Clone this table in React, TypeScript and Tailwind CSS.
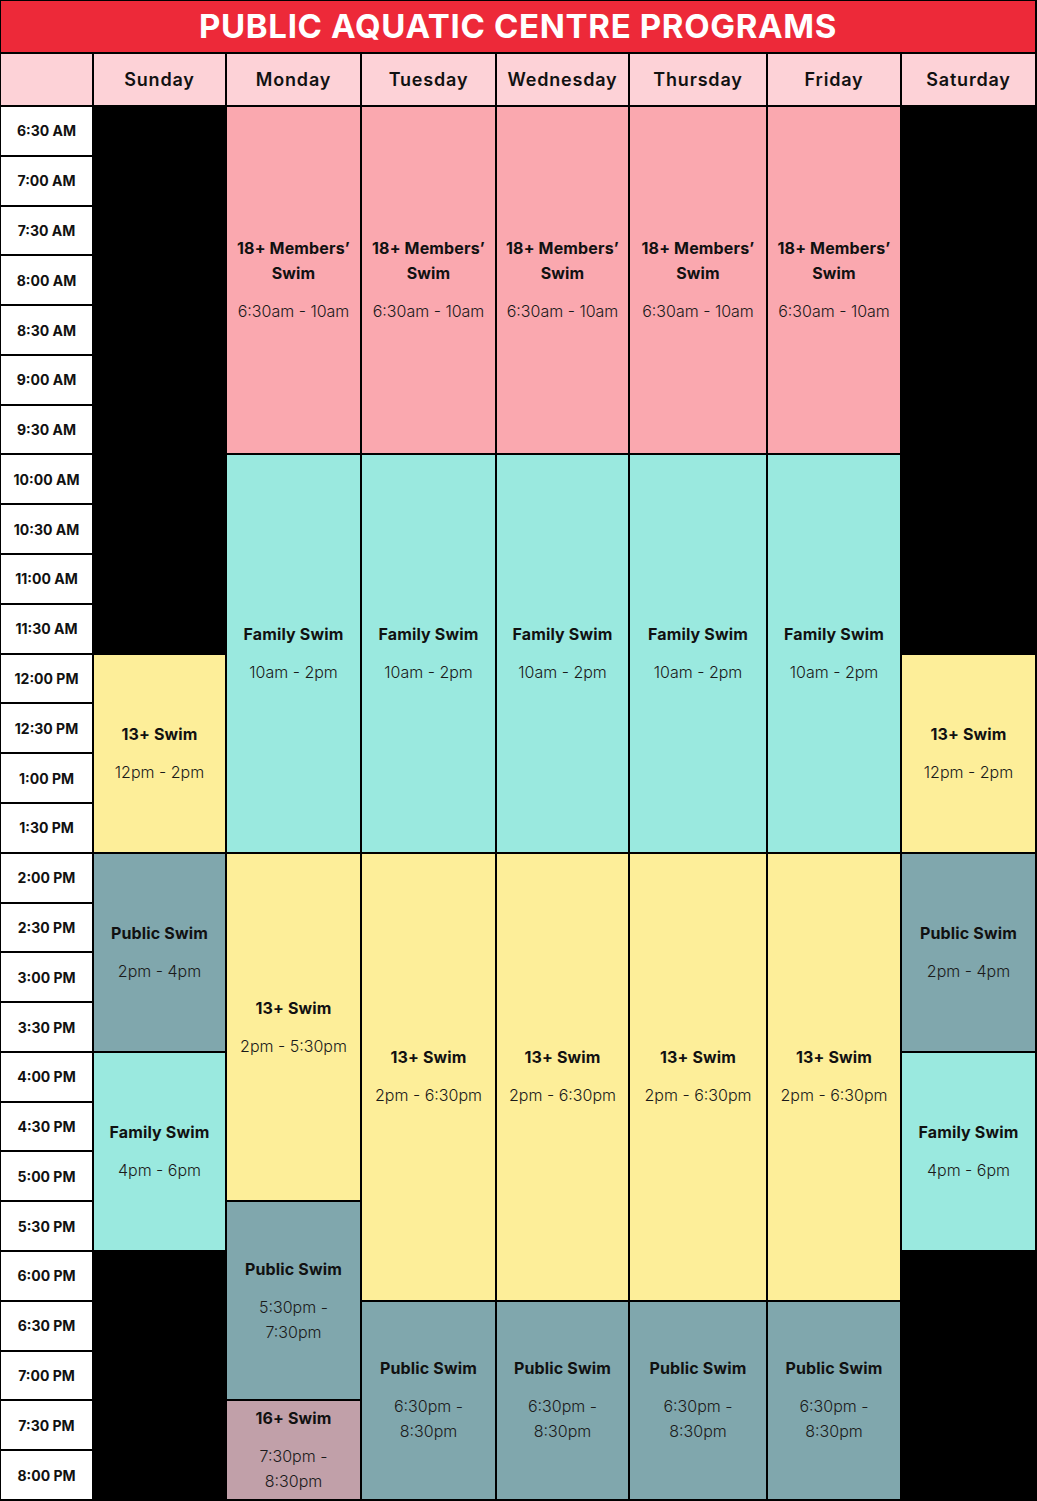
import React from "react";

type Ev = { start: number; span: number; title: string[]; time: string[]; bg: string };

const times = [
  "6:30 AM","7:00 AM","7:30 AM","8:00 AM","8:30 AM","9:00 AM","9:30 AM","10:00 AM","10:30 AM","11:00 AM","11:30 AM",
  "12:00 PM","12:30 PM","1:00 PM","1:30 PM","2:00 PM","2:30 PM","3:00 PM","3:30 PM","4:00 PM","4:30 PM","5:00 PM","5:30 PM",
  "6:00 PM","6:30 PM","7:00 PM","7:30 PM","8:00 PM",
];

const days = ["Sunday","Monday","Tuesday","Wednesday","Thursday","Friday","Saturday"];

const PINK = "bg-[#faa8af]";
const TEAL = "bg-[#9ae9df]";
const YEL = "bg-[#fdee99]";
const GREY = "bg-[#80a7ad]";
const MAUVE = "bg-[#c1a0a9]";

const weekend: Ev[] = [
  { start: 11, span: 4, title: ["13+ Swim"], time: ["12pm - 2pm"], bg: YEL },
  { start: 15, span: 4, title: ["Public Swim"], time: ["2pm - 4pm"], bg: GREY },
  { start: 19, span: 4, title: ["Family Swim"], time: ["4pm - 6pm"], bg: TEAL },
];

const weekdayBase: Ev[] = [
  { start: 0, span: 7, title: ["18+ Members\u2019", "Swim"], time: ["6:30am - 10am"], bg: PINK },
  { start: 7, span: 8, title: ["Family Swim"], time: ["10am - 2pm"], bg: TEAL },
];

const monday: Ev[] = [
  ...weekdayBase,
  { start: 15, span: 7, title: ["13+ Swim"], time: ["2pm - 5:30pm"], bg: YEL },
  { start: 22, span: 4, title: ["Public Swim"], time: ["5:30pm -", "7:30pm"], bg: GREY },
  { start: 26, span: 2, title: ["16+ Swim"], time: ["7:30pm -", "8:30pm"], bg: MAUVE },
];

const tueFri: Ev[] = [
  ...weekdayBase,
  { start: 15, span: 9, title: ["13+ Swim"], time: ["2pm - 6:30pm"], bg: YEL },
  { start: 24, span: 4, title: ["Public Swim"], time: ["6:30pm -", "8:30pm"], bg: GREY },
];

const schedule: Ev[][] = [weekend, monday, tueFri, tueFri, tueFri, tueFri, weekend];

const colClass = [
  "col-start-2",
  "col-start-3",
  "col-start-4",
  "col-start-5",
  "col-start-6",
  "col-start-7",
  "col-start-8",
];

const rowStartClass: Record<number, string> = {
  0: "row-start-3",
  7: "row-start-10",
  11: "row-start-14",
  15: "row-start-18",
  19: "row-start-22",
  22: "row-start-25",
  24: "row-start-27",
  26: "row-start-29",
};

const spanClass: Record<number, string> = {
  2: "row-span-2",
  4: "row-span-4",
  7: "row-span-7",
  8: "row-span-8",
  9: "row-span-9",
};

const timeRowClass = [
  "row-start-3","row-start-4","row-start-5","row-start-6","row-start-7","row-start-8","row-start-9","row-start-10",
  "row-start-11","row-start-12","row-start-13","row-start-14","row-start-15","row-start-16","row-start-17","row-start-18",
  "row-start-19","row-start-20","row-start-21","row-start-22","row-start-23","row-start-24","row-start-25","row-start-26",
  "row-start-27","row-start-28","row-start-29","row-start-30",
];

export default function App() {
  return (
    <div
      className="w-[1037px] h-[1501px] bg-black pt-[1px] pl-[1px] pr-[2px] pb-[2px] grid gap-[2px] grid-cols-[91px_131px_133px_133px_131px_136px_132px_133px] grid-rows-[51px_51px_repeat(28,minmax(0,1fr))]"
      style={{ fontFamily: "Inter, 'Noto Sans', sans-serif" }}
    >
      <div className="col-span-8 row-start-1 bg-[#ed2939] flex items-center justify-center text-white font-bold text-[33px] tracking-[0.02em] leading-none">
        PUBLIC AQUATIC CENTRE PROGRAMS
      </div>
      <div className="col-start-1 row-start-2 bg-[#fdd2d7]" />
      {days.map((d, i) => (
        <div
          key={d}
          className={`${colClass[i]} row-start-2 bg-[#fdd2d7] flex items-center justify-center text-[18px] font-semibold text-[#111] tracking-[0.045em]`}
        >
          {d}
        </div>
      ))}
      {times.map((t, i) => (
        <div
          key={t}
          className={`col-start-1 ${timeRowClass[i]} bg-white flex items-center justify-center text-[14px] font-bold text-[#111]`}
        >
          {t}
        </div>
      ))}
      {schedule.map((evs, di) =>
        evs.map((ev, ei) => (
          <div
            key={`${di}-${ei}`}
            className={`${colClass[di]} ${rowStartClass[ev.start]} ${spanClass[ev.span]} ${ev.bg} flex flex-col items-center justify-center text-center px-1`}
          >
            <div className="text-[16px] font-bold leading-[25px] text-[#111] tracking-[0.01em]">
              {ev.title.map((l) => (
                <div key={l}>{l}</div>
              ))}
            </div>
            <div className="mt-[13px] text-[16px] font-light leading-[25px] text-[#1a1a1a]">
              {ev.time.map((l) => (
                <div key={l}>{l}</div>
              ))}
            </div>
          </div>
        ))
      )}
    </div>
  );
}
